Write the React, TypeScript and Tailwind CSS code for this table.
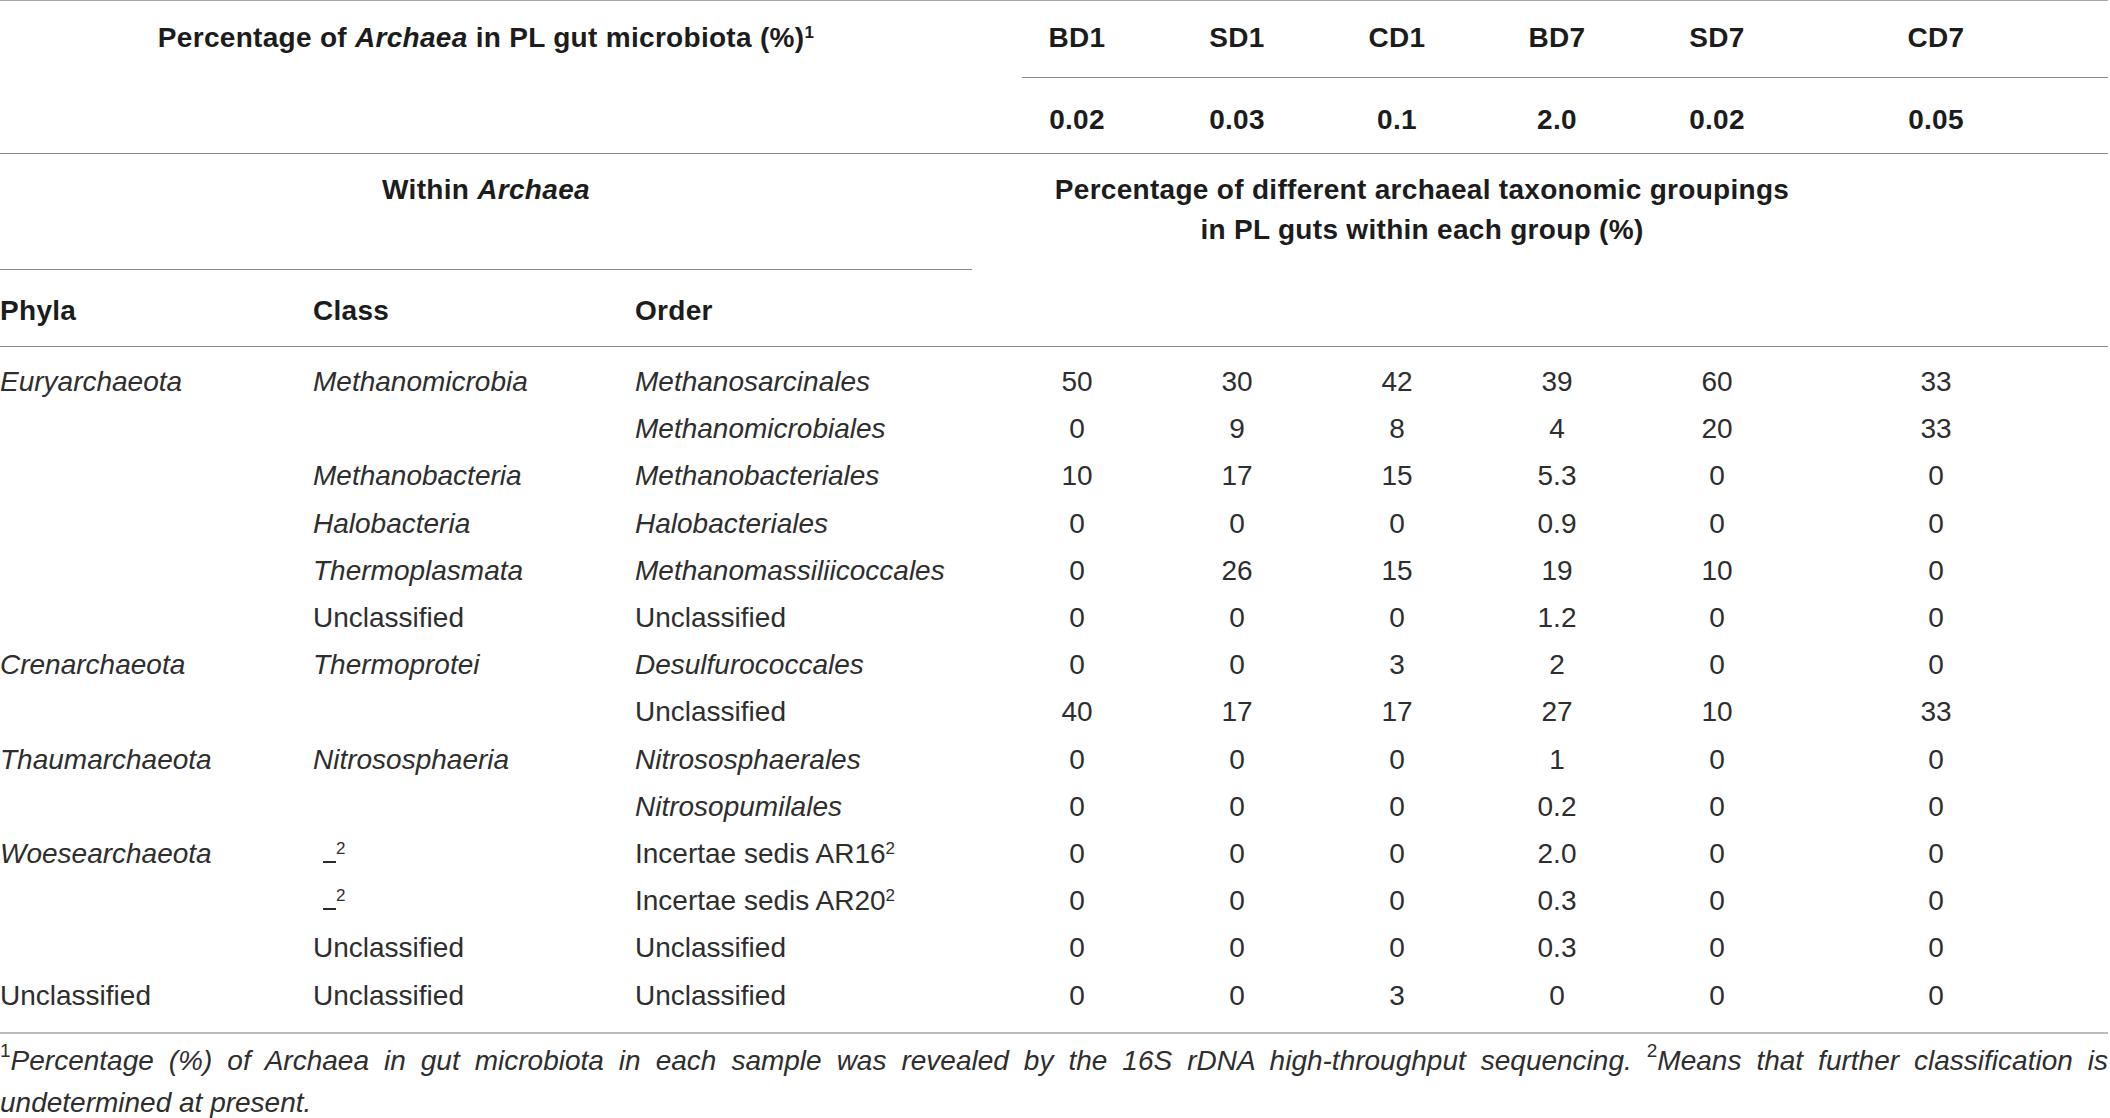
import type { ReactNode } from "react";

type Cell = { text: ReactNode; italic?: boolean } | null;

const it = (text: ReactNode): Cell => ({ text, italic: true });
const up = (text: ReactNode): Cell => ({ text });

function Sup({ children }: { children: ReactNode }) {
  return <sup className="text-[17px] -top-[9px] not-italic">{children}</sup>;
}

const dash: Cell = {
  text: (
    <span>
      <span className="inline-block w-[13px] h-[2px] bg-[#2a2a2a] ml-[10px] align-baseline" />
      <Sup>2</Sup>
    </span>
  ),
};

const rows: { phyla: Cell; cls: Cell; order: Cell; values: (string | number)[] }[] = [
  { phyla: it("Euryarchaeota"), cls: it("Methanomicrobia"), order: it("Methanosarcinales"), values: [50, 30, 42, 39, 60, 33] },
  { phyla: null, cls: null, order: it("Methanomicrobiales"), values: [0, 9, 8, 4, 20, 33] },
  { phyla: null, cls: it("Methanobacteria"), order: it("Methanobacteriales"), values: [10, 17, 15, "5.3", 0, 0] },
  { phyla: null, cls: it("Halobacteria"), order: it("Halobacteriales"), values: [0, 0, 0, "0.9", 0, 0] },
  { phyla: null, cls: it("Thermoplasmata"), order: it("Methanomassiliicoccales"), values: [0, 26, 15, 19, 10, 0] },
  { phyla: null, cls: up("Unclassified"), order: up("Unclassified"), values: [0, 0, 0, "1.2", 0, 0] },
  { phyla: it("Crenarchaeota"), cls: it("Thermoprotei"), order: it("Desulfurococcales"), values: [0, 0, 3, 2, 0, 0] },
  { phyla: null, cls: null, order: up("Unclassified"), values: [40, 17, 17, 27, 10, 33] },
  { phyla: it("Thaumarchaeota"), cls: it("Nitrososphaeria"), order: it("Nitrososphaerales"), values: [0, 0, 0, 1, 0, 0] },
  { phyla: null, cls: null, order: it("Nitrosopumilales"), values: [0, 0, 0, "0.2", 0, 0] },
  {
    phyla: it("Woesearchaeota"),
    cls: dash,
    order: up(<>Incertae sedis AR16<Sup>2</Sup></>),
    values: [0, 0, 0, "2.0", 0, 0],
  },
  {
    phyla: null,
    cls: dash,
    order: up(<>Incertae sedis AR20<Sup>2</Sup></>),
    values: [0, 0, 0, "0.3", 0, 0],
  },
  { phyla: null, cls: up("Unclassified"), order: up("Unclassified"), values: [0, 0, 0, "0.3", 0, 0] },
  { phyla: up("Unclassified"), cls: up("Unclassified"), order: up("Unclassified"), values: [0, 0, 3, 0, 0, 0] },
];

const groups = ["BD1", "SD1", "CD1", "BD7", "SD7", "CD7"];
const totals = ["0.02", "0.03", "0.1", "2.0", "0.02", "0.05"];

const cols = "grid grid-cols-[313px_322px_337px_50px_160px_160px_160px_160px_160px_1fr]";

function Text({ cell }: { cell: Cell }) {
  if (!cell) return <div />;
  return <div className={cell.italic ? "italic" : ""}>{cell.text}</div>;
}

function ValueCell({ value, last, className = "" }: { value: ReactNode; last: boolean; className?: string }) {
  return (
    <div className={`text-center ${last ? "pr-[58px]" : "pr-[50px]"} ${className}`}>{value}</div>
  );
}

export default function App() {
  return (
    <div className="w-[2108px] bg-white text-[28px] leading-[35px] text-[#2e2e2e] font-['Liberation_Sans',Arial,sans-serif]">
      <div className="border-t border-[#a8a8a8]" />

      {/* Group headers */}
      <div className={`${cols} h-[77px] font-bold text-[#1c1c1c] tracking-[0.3px]`}>
        <div className="col-span-3 pt-[19px] text-center">
          Percentage of <span className="italic">Archaea</span> in PL gut microbiota (%)<Sup>1</Sup>
        </div>
        <div />
        {groups.map((g, i) => (
          <ValueCell key={g} value={g} last={i === 5} className="pt-[19px] border-b border-[#8a8a8a]" />
        ))}
      </div>

      {/* Totals */}
      <div className={`${cols} h-[76px] border-b border-[#8a8a8a] font-bold text-[#1c1c1c] tracking-[0.3px]`}>
        <div className="col-span-4" />
        {totals.map((t, i) => (
          <ValueCell key={i} value={t} last={i === 5} className="pt-[24px]" />
        ))}
      </div>

      {/* Taxonomy headers */}
      <div className={`${cols} grid-rows-[116px_76px] border-b border-[#8a8a8a] font-bold text-[#1c1c1c] tracking-[0.3px]`}>
        <div className="col-span-3 row-start-1 pt-[18px] text-center border-b border-[#8a8a8a]">
          Within <span className="italic">Archaea</span>
        </div>
        <div className="row-start-2 pt-[23px]">Phyla</div>
        <div className="row-start-2 pt-[23px]">Class</div>
        <div className="row-start-2 pt-[23px]">Order</div>
        <div className="col-start-5 col-span-5 row-start-1 row-span-2 pt-[16px] text-center leading-[40px]">
          Percentage of different archaeal taxonomic groupings
          <br />
          in PL guts within each group (%)
        </div>
      </div>

      {/* Data */}
      <div className="h-[687px] pt-[11px] border-b-2 border-[#bcbcbc]">
        {rows.map((r, idx) => (
          <div key={idx} className={`${cols} h-[47.2px] items-center`}>
            <Text cell={r.phyla} />
            <Text cell={r.cls} />
            <Text cell={r.order} />
            <div />
            {r.values.map((v, i) => (
              <ValueCell key={i} value={v} last={i === 5} />
            ))}
          </div>
        ))}
      </div>

      {/* Footnote */}
      <div className="pt-[6px] italic leading-[42px]">
        <div className="text-justify [text-align-last:justify]">
          <sup className="text-[19px] -top-[13px] not-italic">1</sup>Percentage (%) of Archaea in gut microbiota in
          each sample was revealed by the 16S rDNA high-throughput sequencing.{" "}
          <sup className="text-[19px] -top-[13px] not-italic">2</sup>Means that further classification is
        </div>
        <div>undetermined at present.</div>
      </div>
    </div>
  );
}
